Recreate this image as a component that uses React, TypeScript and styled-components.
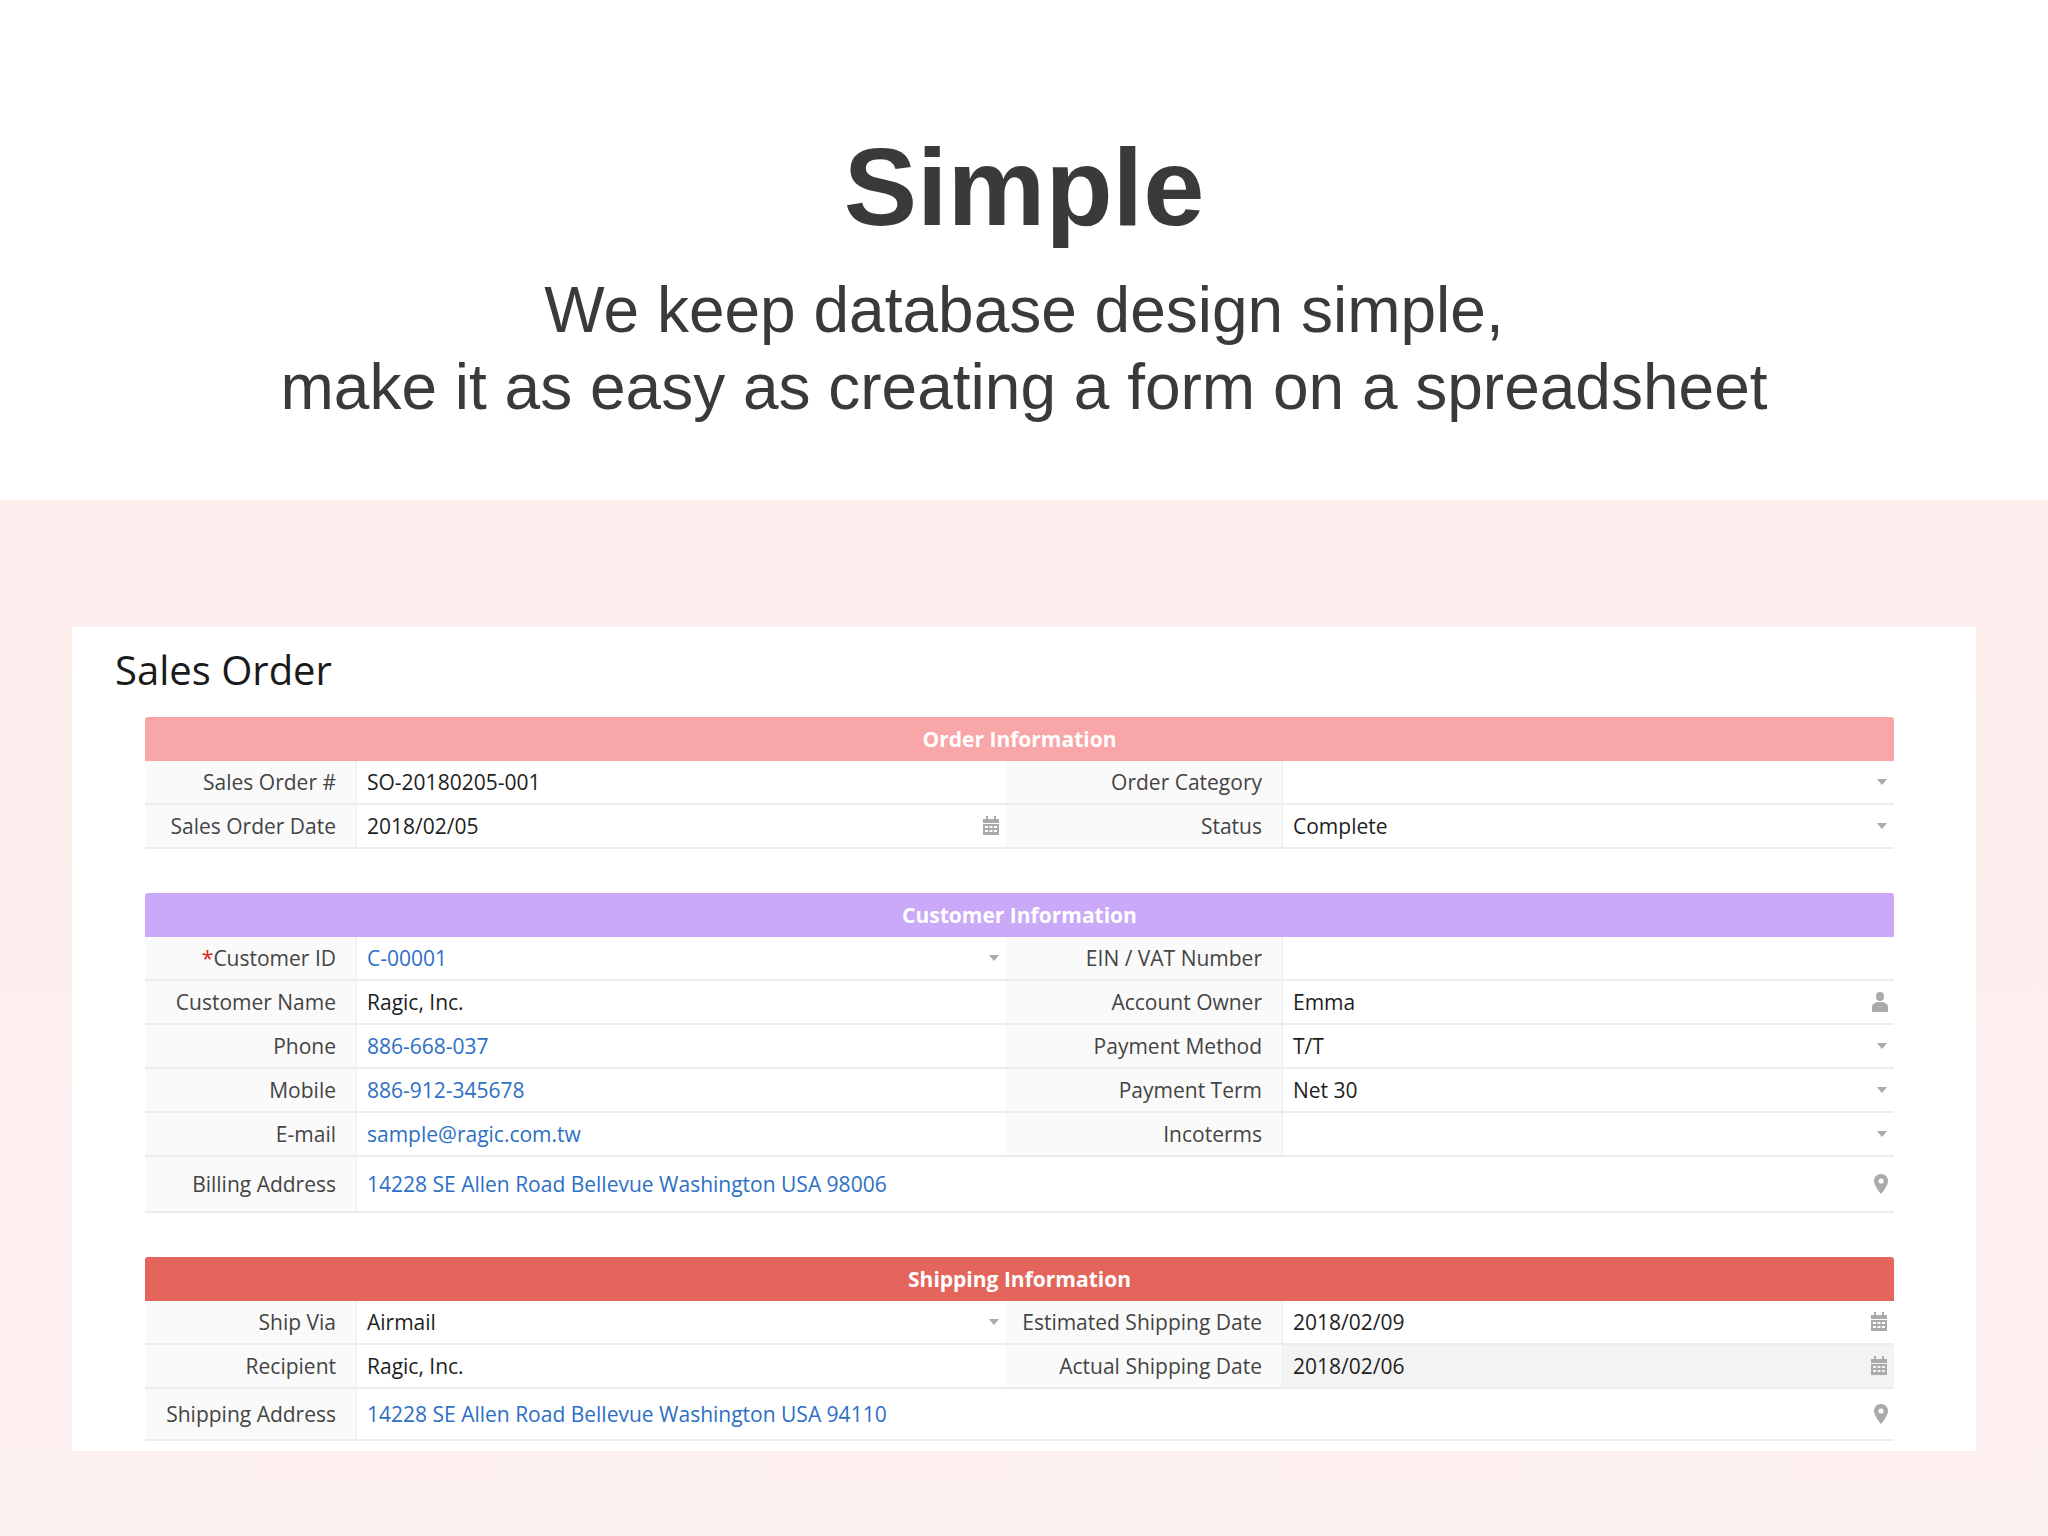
import React from 'react'
import styled, { createGlobalStyle } from 'styled-components'

const GlobalStyle = createGlobalStyle`
  body {
    margin: 0;
    font-family: 'Open Sans', 'Liberation Sans', sans-serif;
    background: #fff;
  }
`

const Page = styled.div`
  width: 2048px;
  height: 1536px;
  display: flex;
  flex-direction: column;
  overflow: hidden;
`

const Hero = styled.section`
  height: 500px;
  background: #fff;
  display: flex;
  flex-direction: column;
  align-items: center;
  padding-top: 122px;
  box-sizing: border-box;
`

const Headline = styled.h1`
  margin: 0;
  font-family: 'Liberation Sans', Arial, sans-serif;
  font-size: 110px;
  line-height: 130px;
  font-weight: 700;
  color: #3a3a3a;
`

const Tagline = styled.p`
  margin: 20px 0 0 0;
  font-family: 'Liberation Sans', Arial, sans-serif;
  font-size: 64px;
  line-height: 77px;
  color: #3a3a3a;
  text-align: center;
`

const Lower = styled.section`
  flex: 1;
  background: linear-gradient(180deg, #fdeeed 0%, #fdf0f0 100%);
  padding: 127px 72px 0 72px;
`

const Card = styled.div`
  background: #fff;
  height: 824px;
  padding: 0 82px 0 73px;
  box-sizing: border-box;
`

const CardTitle = styled.h2`
  margin: 0 0 0 -30px;
  padding-top: 18px;
  height: 72px;
  font-size: 40px;
  font-weight: 400;
  color: #1a1a1a;
  line-height: 50px;
`

const Section = styled.div`
  margin-bottom: 44px;
`

const SectionHead = styled.div<{ $bg: string }>`
  background: ${p => p.$bg};
  color: #fff;
  font-weight: 700;
  font-size: 21px;
  height: 44px;
  display: flex;
  align-items: center;
  justify-content: center;
  border-radius: 3px 3px 0 0;
`

const Row = styled.div<{ $h?: number }>`
  display: grid;
  grid-template-columns: 212px 649px 277px 1fr;
  height: ${p => p.$h ?? 44}px;
  border-bottom: 2px solid #ececec;
  box-sizing: border-box;
`

const WideRow = styled(Row)`
  grid-template-columns: 212px 1fr;
`

const Label = styled.div`
  background: #fafafa;
  color: #444;
  font-size: 21px;
  display: flex;
  align-items: center;
  justify-content: flex-end;
  padding-right: 20px;
  border-right: 1px solid #eee;
  white-space: nowrap;
`

const Req = styled.span`
  color: #e02020;
`

const Value = styled.div<{ $link?: boolean; $shade?: boolean }>`
  background: ${p => (p.$shade ? '#f3f3f3' : '#fff')};
  color: ${p => (p.$link ? '#2d6fc6' : '#1e1e1e')};
  font-size: 21px;
  display: flex;
  align-items: center;
  justify-content: space-between;
  padding: 0 6px 0 10px;
`

const IconBox = styled.span`
  display: inline-flex;
  color: #aaa;
`

type Icon = 'caret' | 'cal' | 'user' | 'pin' | undefined

const Glyph = ({ kind }: { kind: Icon }) => {
  if (!kind) return null
  if (kind === 'caret')
    return (
      <IconBox>
        <svg width="12" height="8" viewBox="0 0 12 8"><path d="M1 1h10L6 7z" fill="#aaa" /></svg>
      </IconBox>
    )
  if (kind === 'cal')
    return (
      <IconBox>
        <svg width="18" height="20" viewBox="0 0 18 20" fill="#aaa">
          <rect x="4" y="0" width="2" height="4" />
          <rect x="12" y="0" width="2" height="4" />
          <rect x="1" y="3" width="16" height="4" />
          <path d="M1 8h16v11H1z M3 10v2h3v-2z M7.5 10v2h3v-2z M12 10v2h3v-2z M3 14v2h3v-2z M7.5 14v2h3v-2z M12 14v2h3v-2z" fillRule="evenodd" />
        </svg>
      </IconBox>
    )
  if (kind === 'user')
    return (
      <IconBox>
        <svg width="16" height="20" viewBox="0 0 16 20" fill="#aaa">
          <rect x="4" y="0" width="8" height="9" rx="4" />
          <path d="M0 20v-5c0-3 3-5 8-5s8 2 8 5v5z" />
        </svg>
      </IconBox>
    )
  return (
    <IconBox>
      <svg width="14" height="20" viewBox="0 0 14 20">
        <path d="M7 0C3 0 0 3 0 7c0 5 7 13 7 13s7-8 7-13c0-4-3-7-7-7z" fill="#aaa" />
        <circle cx="7" cy="7" r="2.6" fill="#fff" />
      </svg>
    </IconBox>
  )
}

type Field = { label: React.ReactNode; value?: string; link?: boolean; icon?: Icon; shade?: boolean }

const Cell = ({ f }: { f: Field }) => (
  <>
    <Label>{f.label}</Label>
    <Value $link={f.link} $shade={f.shade}>
      <span>{f.value}</span>
      <Glyph kind={f.icon} />
    </Value>
  </>
)

const Pair = ({ a, b }: { a: Field; b: Field }) => (
  <Row>
    <Cell f={a} />
    <Cell f={b} />
  </Row>
)

const Wide = ({ f, h }: { f: Field; h: number }) => (
  <WideRow $h={h}>
    <Cell f={f} />
  </WideRow>
)

export default function App() {
  return (
    <Page>
      <GlobalStyle />
      <Hero>
        <Headline>Simple</Headline>
        <Tagline>
          We keep database design simple,
          <br />
          make it as easy as creating a form on a spreadsheet
        </Tagline>
      </Hero>
      <Lower>
        <Card>
          <CardTitle>Sales Order</CardTitle>
          <Section>
            <SectionHead $bg="#f9a6a8">Order Information</SectionHead>
            <Pair a={{ label: 'Sales Order #', value: 'SO-20180205-001' }} b={{ label: 'Order Category', icon: 'caret' }} />
            <Pair a={{ label: 'Sales Order Date', value: '2018/02/05', icon: 'cal' }} b={{ label: 'Status', value: 'Complete', icon: 'caret' }} />
          </Section>
          <Section>
            <SectionHead $bg="#caa9f8">Customer Information</SectionHead>
            <Pair
              a={{ label: <><Req>*</Req>Customer ID</>, value: 'C-00001', link: true, icon: 'caret' }}
              b={{ label: 'EIN / VAT Number' }}
            />
            <Pair a={{ label: 'Customer Name', value: 'Ragic, Inc.' }} b={{ label: 'Account Owner', value: 'Emma', icon: 'user' }} />
            <Pair a={{ label: 'Phone', value: '886-668-037', link: true }} b={{ label: 'Payment Method', value: 'T/T', icon: 'caret' }} />
            <Pair a={{ label: 'Mobile', value: '886-912-345678', link: true }} b={{ label: 'Payment Term', value: 'Net 30', icon: 'caret' }} />
            <Pair a={{ label: 'E-mail', value: 'sample@ragic.com.tw', link: true }} b={{ label: 'Incoterms', icon: 'caret' }} />
            <Wide h={56} f={{ label: 'Billing Address', value: '14228 SE Allen Road Bellevue Washington USA 98006', link: true, icon: 'pin' }} />
          </Section>
          <Section>
            <SectionHead $bg="#e4655c">Shipping Information</SectionHead>
            <Pair a={{ label: 'Ship Via', value: 'Airmail', icon: 'caret' }} b={{ label: 'Estimated Shipping Date', value: '2018/02/09', icon: 'cal' }} />
            <Pair a={{ label: 'Recipient', value: 'Ragic, Inc.' }} b={{ label: 'Actual Shipping Date', value: '2018/02/06', icon: 'cal', shade: true }} />
            <Wide h={52} f={{ label: 'Shipping Address', value: '14228 SE Allen Road Bellevue Washington USA 94110', link: true, icon: 'pin' }} />
          </Section>
        </Card>
      </Lower>
    </Page>
  )
}
